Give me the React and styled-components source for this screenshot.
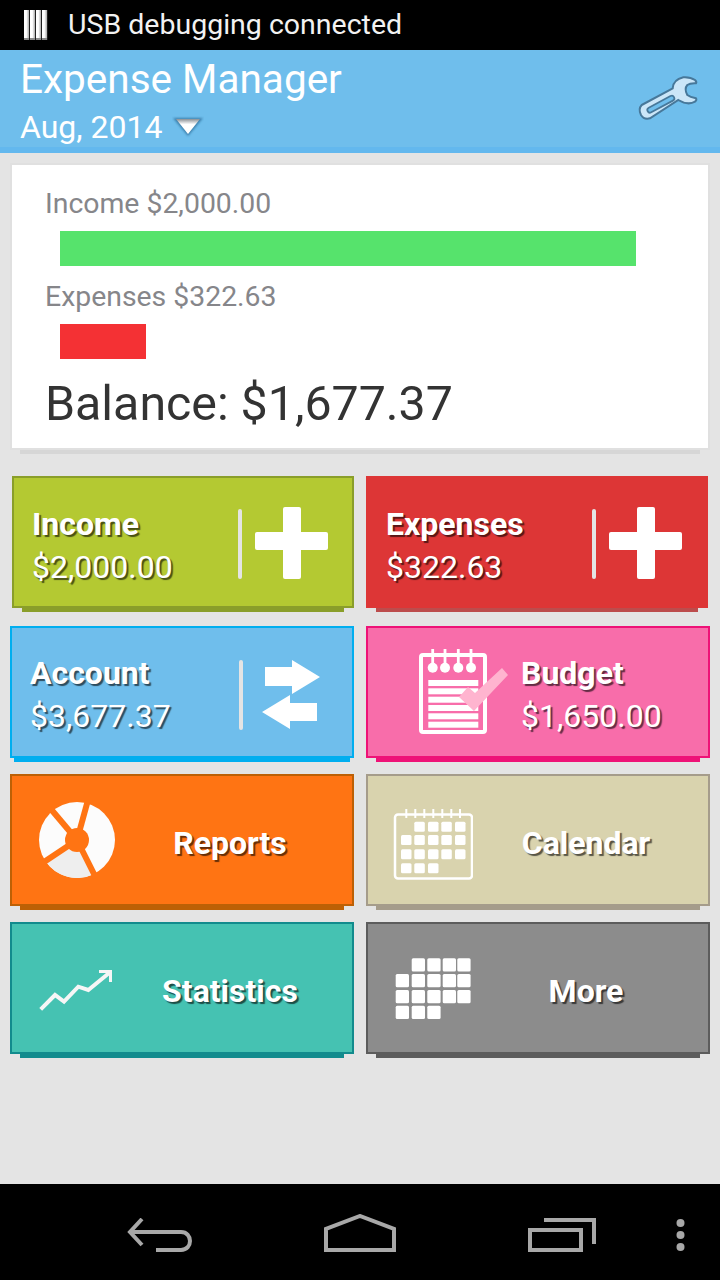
import React from 'react';
import styled, { createGlobalStyle } from 'styled-components';

const GlobalStyle = createGlobalStyle`
  html, body { margin: 0; padding: 0; background: #e4e4e4; }
  * { box-sizing: border-box; }
`;

const Screen = styled.div`
  width: 720px;
  height: 1280px;
  display: flex;
  flex-direction: column;
  background: #e4e4e4;
  font-family: Roboto, "Liberation Sans", sans-serif;
  overflow: hidden;
`;

const StatusBar = styled.div`
  height: 50px;
  flex: none;
  background: #000;
  color: #f2f2f2;
  display: flex;
  align-items: center;
  gap: 20px;
  padding-left: 24px;
  font-size: 28.5px;
  line-height: 50px;
`;

const Header = styled.header`
  height: 103px;
  flex: none;
  background: #6fbeec;
  border-bottom: 6px solid #63b8ee;
  display: flex;
  justify-content: space-between;
  padding: 6px 20px 0 20px;
  color: #fff;
`;

const Title = styled.div`
  font-size: 40.5px;
  line-height: 46px;
`;

const Period = styled.div`
  display: flex;
  align-items: center;
  gap: 10px;
  font-size: 32px;
  line-height: 50px;
`;

const Summary = styled.section`
  height: 287px;
  margin: 10px 10px 26px;
  padding: 21px 0 0 33px;
  background: #fff;
  border: 2px solid #e0e0e0;
  box-shadow: 0 14px 0 -10px #d6d6d6;
`;

const SummaryLabel = styled.div`
  font-size: 28.4px;
  line-height: 36px;
  color: #86868a;
`;

const Bar = styled.div`
  width: ${p => p.$width}px;
  height: 35px;
  margin: 9px 0 13px 15px;
  background: ${p => p.$color};
`;

const Balance = styled.div`
  font-size: 48.3px;
  line-height: 64px;
  color: #333;
`;

const Tiles = styled.div`
  display: grid;
  grid-template-columns: 344px 344px;
  column-gap: 12px;
  padding: 0 10px;
`;

const Tile = styled.div`
  height: 132px;
  margin: 0 ${p => p.$trimRight ? 2 : 0}px ${p => p.$rowGap || 16}px ${p => p.$trimLeft ? 2 : 0}px;
  display: flex;
  align-items: center;
  background: ${p => p.$bg};
  border: 2px solid ${p => p.$edge};
  box-shadow: 0 ${p => (p.$lip || 10) + 4}px 0 -${p => p.$lip || 10}px ${p => p.$shade || p.$edge};
  color: #fff;
  text-shadow: 2px 2px 1px rgba(0, 0, 0, 0.6);
`;

const ValueTile = styled(Tile)`
  padding: 0 24px 0 ${p => p.$pad || 18}px;
`;

const NavTile = styled(Tile)`
  padding: 0 9px 0 25px;
`;

const BudgetTile = styled(Tile)`
  padding-left: 51px;
  gap: 12px;
`;

const TileText = styled.div`
  flex: 1;
  padding-top: ${p => p.$top || 8}px;
  font-size: 32px;
  line-height: 43px;
`;

const TileName = styled.div`
  font-weight: 700;
`;

const TileLabel = styled.div`
  flex: 1;
  padding-top: 6px;
  text-align: center;
  font-size: 32px;
  font-weight: 700;
`;

const Divider = styled.div`
  width: 4px;
  height: 70px;
  margin: ${p => p.$drop || 4}px 13px 0 0;
  border-radius: 2px;
  background: #e4e4e4;
`;

const IconShift = styled.div`
  display: flex;
  margin-top: ${p => p.$drop}px;
`;

const NavBar = styled.nav`
  height: 96px;
  flex: none;
  margin-top: auto;
  background: #000;
  display: flex;
  align-items: flex-start;
  gap: 131px;
  padding: 34px 0 0 127px;
  color: #a8a8a8;
`;

const Overflow = styled.svg`
  margin-left: -52px;
`;

const UsbIcon = () => (
  <svg width="24" height="30" viewBox="0 0 24 30">
    <defs>
      <linearGradient id="usbBar" x1="0" y1="0" x2="1" y2="0">
        <stop offset="0.45" stopColor="#fff" />
        <stop offset="1" stopColor="#a6a6a6" />
      </linearGradient>
    </defs>
    {[0, 6, 12, 18].map(x => (
      <g key={x}>
        <rect x={x} y="0" width="5.2" height="28" fill="url(#usbBar)" />
        <rect x={x} y="28" width="5.2" height="2" fill="#8a8a8a" />
      </g>
    ))}
  </svg>
);

const DropArrow = () => (
  <svg width="32" height="22" viewBox="0 0 32 22">
    <defs>
      <linearGradient id="dropFill" x1="0" y1="0" x2="0" y2="1">
        <stop offset="0" stopColor="#8a8f94" />
        <stop offset="0.35" stopColor="#fff" />
        <stop offset="1" stopColor="#fff" />
      </linearGradient>
      <filter id="dropSoft" x="-20%" y="-20%" width="140%" height="140%">
        <feGaussianBlur stdDeviation="1.2" />
      </filter>
    </defs>
    <path d="M1 2H31L16 20Z" fill="#2f6f9c" opacity="0.8" filter="url(#dropSoft)" />
    <path d="M4 3H28L16 18Z" fill="url(#dropFill)" />
  </svg>
);

const Wrench = () => (
  <svg width="64" height="52" viewBox="0 0 64 52" style={{ marginTop: 16 }}>
    <path
      d="M5.7 33L36.7 16.3C37 11 40 7 47.3 5.3C52 5 56 6 59 8Q61 10 60 11.3Q54 11 51.3 13Q48 17 51.3 23Q54 25 60 26.3Q61 28 59 29.7C55 32 49 32 42.3 28L14 46.3Q8 48 5 43Q2 37 5.7 33Z"
      fill="#cbe6f8"
      stroke="#47789a"
      strokeWidth="2"
    />
    <path d="M14 38L35.7 26.3" stroke="#47789a" strokeWidth="7" strokeLinecap="round" />
    <path d="M14 38L35.7 26.3" stroke="#6fbeec" strokeWidth="3.5" strokeLinecap="round" />
  </svg>
);

const PlusIcon = () => (
  <svg width="73" height="72" viewBox="0 0 73 72">
    <rect x="28" y="0" width="18" height="72" rx="2" fill="#fff" />
    <rect x="0" y="25" width="73" height="18" rx="2" fill="#fff" />
  </svg>
);

const SwapIcon = () => (
  <svg width="72" height="70" viewBox="0 0 72 70">
    <path d="M9 7H36V0L64 17L36 34V26H9Z" fill="#fff" />
    <path d="M6 52L34 35V43H61V61H34V69Z" fill="#fff" />
  </svg>
);

const NotepadIcon = () => (
  <svg width="90" height="90" viewBox="0 0 90 90">
    <rect x="2" y="7" width="64" height="77" rx="2" fill="none" stroke="#fff" strokeWidth="4" />
    {[13.7, 26, 39.3, 52].map(x => (
      <g key={x} fill="#fff">
        <rect x={x - 1.4} y="1" width="2.8" height="18" />
        <circle cx={x} cy="19.7" r="5" />
      </g>
    ))}
    {[32, 40.3, 48.7, 57, 65.3, 73.7].map(y => (
      <rect key={y} x="9.3" y={y} width="50" height="6" fill="#fff" />
    ))}
    <path d="M40 49L49 39L56 45L83 20L89 27L55 63Z" fill="#ffb4cf" />
  </svg>
);

const PieIcon = () => (
  <svg width="80" height="80" viewBox="0 0 80 80">
    <circle cx="40" cy="40" r="38" fill="#fcfcfc" />
    <path d="M40 40L8.4 61.1A38 38 0 0 0 57 74Z" fill="#eeeeee" />
    <g stroke="#ff7413" strokeWidth="6">
      <path d="M40 40L13 8" />
      <path d="M40 40L51 0" />
      <path d="M40 40L59 78" />
      <path d="M40 40L4 64" />
    </g>
    <circle cx="40" cy="40" r="12" fill="#ff7413" />
  </svg>
);

// dot positions shared by the calendar and the "more" grid
const GRID_ROWS = [[1, 2, 3, 4], [0, 1, 2, 3, 4], [0, 1, 2, 3, 4], [0, 1, 2]];

const CalendarIcon = () => {
  const cols = [8, 21.3, 35, 48.3, 62];
  const rows = [21.7, 35, 49.3, 63.3];
  return (
    <svg width="80" height="80" viewBox="0 0 80 80">
      <rect x="2" y="14.5" width="77" height="64" rx="3" fill="none" stroke="#fff" strokeWidth="2.5" />
      {[13.3, 22.3, 31.3, 40.3, 49.3, 58.3, 67].map(x => (
        <rect key={x} x={x - 1} y="9" width="2" height="9" fill="#fff" />
      ))}
      {GRID_ROWS.map((line, r) =>
        line.map(c => (
          <rect key={`${r}-${c}`} x={cols[c]} y={rows[r]} width="10.5" height="10" rx="1.5" fill="#fff" />
        ))
      )}
    </svg>
  );
};

const ChartIcon = () => (
  <svg width="80" height="80" viewBox="0 0 80 80">
    <path d="M3.7 61.3L18 47L27 53.7L41.3 38.7L51.3 42L73 24.3" fill="none" stroke="#f6f6f6" strokeWidth="4" />
    <path d="M62 22H75V34L72 34V25H62Z" fill="#f6f6f6" />
  </svg>
);

const MoreIcon = () => {
  const cols = [2.7, 18.7, 34.3, 49.7, 64.3];
  const rows = [10.3, 26, 42, 57.7];
  return (
    <svg width="80" height="80" viewBox="0 0 80 80">
      {GRID_ROWS.map((line, r) =>
        line.map(c => (
          <rect key={`${r}-${c}`} x={cols[c]} y={rows[r]} width="13.3" height="13.3" rx="1.5" fill="#fff" />
        ))
      )}
    </svg>
  );
};

const BackKey = () => (
  <svg width="66" height="34" viewBox="0 0 66 34" fill="none" stroke="currentColor" strokeWidth="4">
    <path d="M15 1L3 14L15 27" />
    <path d="M3 14H54C66 14 66 32 54 32H29" />
  </svg>
);

const HomeKey = () => (
  <svg width="72" height="38" viewBox="0 0 72 38" fill="none" stroke="currentColor" strokeWidth="4" style={{ marginTop: -4 }}>
    <path d="M2 36V15L36 2L70 15V36Z" />
  </svg>
);

const RecentKey = () => (
  <svg width="69" height="34" viewBox="0 0 69 34" fill="none" stroke="currentColor" strokeWidth="4">
    <rect x="3" y="12" width="51" height="20" />
    <path d="M17 2H67V26" />
  </svg>
);

export default function App() {
  return (
    <Screen>
      <GlobalStyle />
      <StatusBar>
        <UsbIcon />
        USB debugging connected
      </StatusBar>

      <Header>
        <div>
          <Title>Expense Manager</Title>
          <Period>
            Aug, 2014
            <DropArrow />
          </Period>
        </div>
        <Wrench />
      </Header>

      <Summary>
        <SummaryLabel>Income $2,000.00</SummaryLabel>
        <Bar $width={576} $color="#56e36c" />
        <SummaryLabel>Expenses $322.63</SummaryLabel>
        <Bar $width={86} $color="#f43134" />
        <Balance>Balance: $1,677.37</Balance>
      </Summary>

      <Tiles>
        <ValueTile $bg="#b4c932" $edge="#8a9e2a" $trimLeft $rowGap={18}>
          <TileText>
            <TileName>Income</TileName>
            $2,000.00
          </TileText>
          <Divider />
          <IconShift $drop={2}>
            <PlusIcon />
          </IconShift>
        </ValueTile>
        <ValueTile $bg="#dd3636" $edge="#dd3636" $shade="#bc4c4c" $trimRight $rowGap={18}>
          <TileText>
            <TileName>Expenses</TileName>
            $322.63
          </TileText>
          <Divider />
          <IconShift $drop={2}>
            <PlusIcon />
          </IconShift>
        </ValueTile>

        <ValueTile $bg="#6fbeec" $edge="#00aeef" $pad={18} $lip={4}>
          <TileText $top={6}>
            <TileName>Account</TileName>
            $3,677.37
          </TileText>
          <Divider $drop={6} />
          <IconShift $drop={6}>
            <SwapIcon />
          </IconShift>
        </ValueTile>
        <BudgetTile $bg="#f86daa" $edge="#ee1277">
          <IconShift $drop={2}>
            <NotepadIcon />
          </IconShift>
          <TileText $top={6}>
            <TileName>Budget</TileName>
            $1,650.00
          </TileText>
        </BudgetTile>

        <NavTile $bg="#ff7413" $edge="#bd6005">
          <PieIcon />
          <TileLabel>Reports</TileLabel>
        </NavTile>
        <NavTile $bg="#d9d3ae" $edge="#a59c8b">
          <CalendarIcon />
          <TileLabel>Calendar</TileLabel>
        </NavTile>

        <NavTile $bg="#45c2b2" $edge="#128b8d">
          <ChartIcon />
          <TileLabel>Statistics</TileLabel>
        </NavTile>
        <NavTile $bg="#8c8c8c" $edge="#5c5c5c">
          <MoreIcon />
          <TileLabel>More</TileLabel>
        </NavTile>
      </Tiles>

      <NavBar>
        <BackKey />
        <HomeKey />
        <RecentKey />
        <Overflow width="11" height="34" viewBox="0 0 11 34" fill="currentColor">
          <circle cx="5.5" cy="5" r="4" />
          <circle cx="5.5" cy="17" r="4" />
          <circle cx="5.5" cy="29" r="4" />
        </Overflow>
      </NavBar>
    </Screen>
  );
}
